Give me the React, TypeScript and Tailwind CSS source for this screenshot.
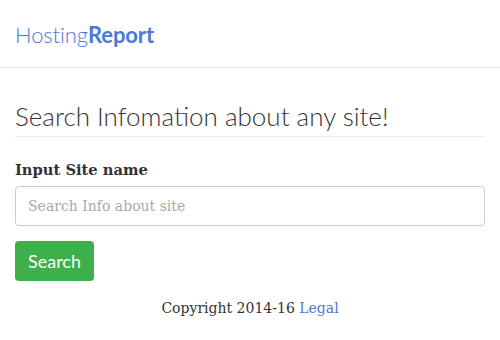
export default function App() {
  return (
    <div className="min-h-[340px] w-[500px] bg-white font-['DejaVu_Serif',serif] text-[#333]">
      <header className="flex h-[68px] items-center border-b border-[#e3e3e3] px-[15px] pt-[1px]">
        <div className="font-['Lato',sans-serif] text-[22px] tracking-[-0.1px] text-[#4b7bd8]">
          <span className="font-light">Hosting</span>
          <span className="font-bold">Report</span>
        </div>
      </header>

      <main className="px-[15px]">
        <h1 className="mt-[33px] border-b border-[#eeeeee] pb-[5px] font-['Lato',sans-serif] text-[26px] font-light leading-[30px] text-[#333]">
          Search Infomation about any site!
        </h1>

        <label className="mt-[23px] block text-[14.7px] font-bold leading-[20px]">Input Site name</label>
        <input
          type="text"
          placeholder="Search Info about site"
          className="mt-[6px] block h-[40px] w-full rounded border border-[#cccccc] px-3 text-[14px] text-[#555] placeholder:text-[#a9a9a9] focus:outline-none"
        />

        <button
          type="button"
          className="mt-[15px] h-[40px] rounded bg-[#3cb04a] px-[13px] font-['Lato',sans-serif] text-[18px] text-white"
        >
          Search
        </button>

        <p className="mt-[17px] text-center text-[14px]">
          Copyright 2014-16 <a href="#" className="text-[#4b7bd8]">Legal</a>
        </p>
      </main>
    </div>
  );
}
